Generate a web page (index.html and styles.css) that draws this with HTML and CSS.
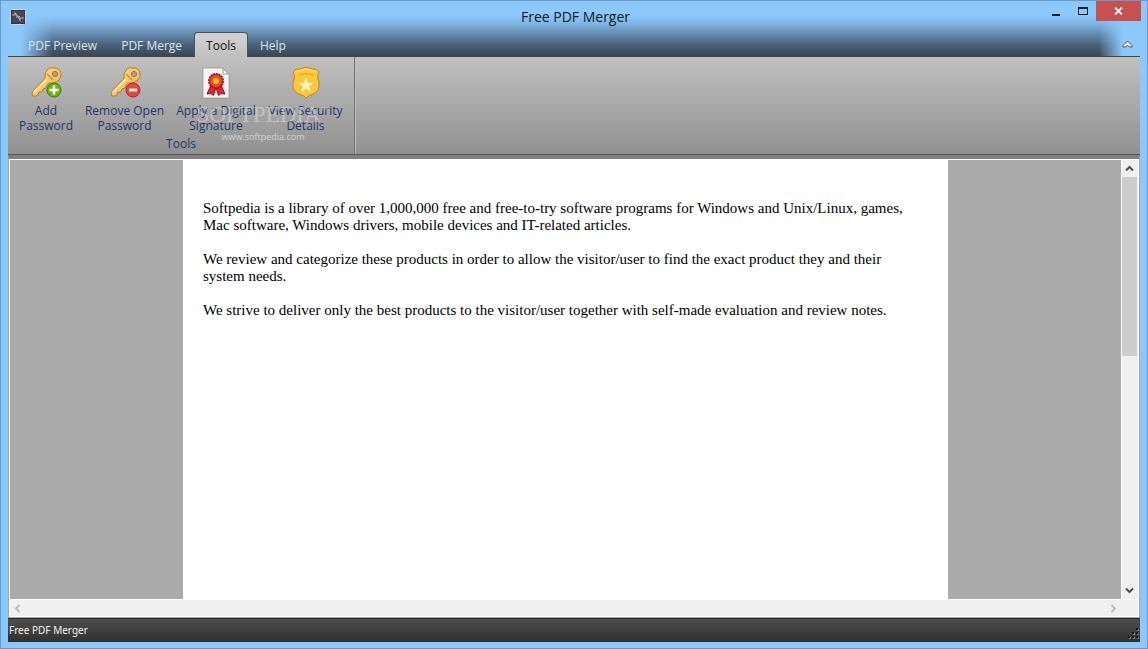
FILE: index.html
```html
<!DOCTYPE html>
<html lang="en">
<head>
  <meta charset="UTF-8">
  <meta name="viewport" content="width=device-width, initial-scale=1.0">
  <title>Free PDF Merger</title>
  <link rel="stylesheet" href="styles.css">
</head>
<body>

  <div class="window">
    <header class="header">
      <div class="titlebar">
        <svg class="app-icon" viewBox="0 0 16 16">
          <rect x="0.5" y="0.5" width="15" height="15" rx="2" fill="#44465a" stroke="#d8d4d0"/>
          <rect x="1.5" y="1.5" width="13" height="13" fill="none" stroke="#33354a"/>
          <path d="M2 6h3V4l3 3.500h2M6 8h2l2 3V9h4" fill="none" stroke="#aeb0ba" stroke-width="1.200"/>
        </svg>
        <h1 class="title">Free PDF Merger</h1>
        <div class="controls">
          <button class="control" aria-label="Minimize">
            <svg width="11" height="11" viewBox="0 0 11 11"><path d="M2 8h8v2H2z" fill="#1b1b1b"/></svg>
          </button>
          <button class="control" aria-label="Maximize">
            <svg width="11" height="11" viewBox="0 0 11 11"><path d="M1 1h10v8H1zM2 3v5h8V3z" fill="#1b1b1b" fill-rule="evenodd"/></svg>
          </button>
          <button class="control close" aria-label="Close">
            <svg width="9" height="8" viewBox="0 0 9 8"><path d="M1 .5l7 7M8 .5l-7 7" stroke="#fff" stroke-width="1.800"/></svg>
          </button>
        </div>
      </div>
      <nav class="tabs">
        <button class="tab">PDF Preview</button>
        <button class="tab">PDF Merge</button>
        <button class="tab active">Tools</button>
        <button class="tab">Help</button>
        <button class="collapse" aria-label="Collapse ribbon">
          <svg width="11" height="9" viewBox="0 0 11 9"><path d="M5.500 1L10 5.500V7H7.500l-2-2-2 2H1V5.500z" fill="#fff" stroke="#3f4650"/></svg>
        </button>
      </nav>
    </header>

    <section class="ribbon">
      <div class="group">
        <div class="tools">
          <button class="tool add">
            <svg class="icon" viewBox="0 0 32 32">
              <use href="#key"/>
              <circle cx="24" cy="23" r="7" fill="#68b80c" stroke="#37770c"/>
              <path d="M24 18.500v9M19.500 23h9" stroke="#fff" stroke-width="2.400"/>
            </svg>
            <span>Add<br>Password</span>
          </button>
          <button class="tool remove">
            <svg class="icon" viewBox="0 0 32 32">
              <use href="#key"/>
              <circle cx="24" cy="23" r="7" fill="#e8463a" stroke="#a72a24"/>
              <path d="M20 23h8" stroke="#fff" stroke-width="2.800"/>
            </svg>
            <span>Remove Open<br>Password</span>
          </button>
          <button class="tool sign">
            <svg class="icon" viewBox="0 0 32 32">
              <path d="M3.500 1.500h20l5 5v24h-25z" fill="#f4f5f5" stroke="#fff"/>
              <path d="M3 31h26V7l-6-6H3z" fill="none" stroke="#8d9092" stroke-width=".8"/>
              <path d="M23 1.500V7h5.500z" fill="#fff" stroke="#999"/>
              <path d="M11 18L7 27l4-.5 2.500 2 2.500-8 2.500 8 2.500-2 4 .5-4-9z" fill="#df292a" stroke="#a90f16"/>
              <circle cx="16" cy="14" r="7.200" fill="#e5292b" stroke="#aa1018" stroke-width="1.600" stroke-dasharray="2 .8"/>
              <circle cx="16" cy="14" r="5" fill="none" stroke="#f47354" stroke-width=".7"/>
              <circle cx="16" cy="14" r="3.500" fill="#ffc321" stroke="#d26b09"/>
            </svg>
            <span>Apply a Digital<br>Signature</span>
          </button>
          <button class="tool view">
            <svg class="icon" viewBox="0 0 32 32">
              <path d="M6 2q2 1 4 0 3-1.500 6-1.500T22 2q2 1 4 0l3 3q-2 3-1 7 1.500 4 1 8-1 5-7 7.500-4 1-6 3.500-2-2.500-6-3.500-6-2.500-7-7.500-.5-4 1-8 1-4-1-7z" fill="#fcc938" stroke="#c78317"/>
              <path d="M6.500 3.500q2 1 4 0 2.500-1.500 5.500-1.500t5.500 1.500q2 1 4 0" fill="none" stroke="#ffe991"/>
              <path d="M9 7.500q7-1.500 14 0" fill="none" stroke="#df991f"/>
              <path d="M16 9l2.300 6.300 6.700.2-5.300 4.100 1.900 6.400-5.600-3.800-5.600 3.800 1.900-6.400L7 15.500l6.700-.2z" fill="#fff2b4" stroke="#f0bb33" stroke-width=".6"/>
            </svg>
            <span>View Security<br>Details</span>
          </button>
        </div>
        <div class="group-label">Tools</div>
        <div class="watermark">
          <div class="brand">SOFTPEDIA<sup>™</sup></div>
          <div class="site">www.softpedia.com</div>
        </div>
      </div>
    </section>

    <main class="viewer">
      <div class="viewport">
        <article class="page">
          <p>Softpedia is a library of over 1,000,000 free and free-to-try software programs for Windows and Unix/Linux, games,<br>Mac software, Windows drivers, mobile devices and IT-related articles.</p>
          <p>We review and categorize these products in order to allow the visitor/user to find the exact product they and their<br>system needs.</p>
          <p>We strive to deliver only the best products to the visitor/user together with self-made evaluation and review notes.</p>
        </article>
      </div>
      <div class="scroll-y">
        <button class="arrow" aria-label="Scroll up">
          <svg width="9" height="7" viewBox="0 0 9 7"><path d="M1 5.500L4.500 2 8 5.500" fill="none" stroke="#505050" stroke-width="2"/></svg>
        </button>
        <div class="thumb"></div>
        <button class="arrow down" aria-label="Scroll down">
          <svg width="9" height="7" viewBox="0 0 9 7"><path d="M1 1.500L4.500 5 8 1.500" fill="none" stroke="#505050" stroke-width="2"/></svg>
        </button>
      </div>
      <div class="scroll-x">
        <button class="arrow" aria-label="Scroll left" disabled>
          <svg width="7" height="9" viewBox="0 0 7 9"><path d="M5.500 1L2 4.500 5.500 8" fill="none" stroke="#bdbdbd" stroke-width="2"/></svg>
        </button>
        <button class="arrow" aria-label="Scroll right" disabled>
          <svg width="7" height="9" viewBox="0 0 7 9"><path d="M1.500 1L5 4.500 1.500 8" fill="none" stroke="#bdbdbd" stroke-width="2"/></svg>
        </button>
      </div>
    </main>

    <footer class="status">
      <span>Free PDF Merger</span>
      <svg class="grip" width="11" height="11" viewBox="0 0 11 11">
        <path d="M9 1h2v2H9zM5 5h2v2H5zM9 5h2v2H9zM1 9h2v2H1zM5 9h2v2H5zM9 9h2v2H9z" fill="#777"/>
        <path d="M8 0h2v2H8zM4 4h2v2H4zM8 4h2v2H8zM0 8h2v2H0zM4 8h2v2H4zM8 8h2v2H8z" fill="#111"/>
      </svg>
    </footer>
  </div>

  <!-- key shape shared by the two password buttons -->
  <svg class="defs" width="0" height="0">
    <defs>
      <linearGradient id="gold" x1="0" y1="0" x2="1" y2="1">
        <stop offset="0" stop-color="#ffe6a0"/>
        <stop offset="1" stop-color="#e9ac3c"/>
      </linearGradient>
      <g id="key">
        <path d="M18 2q2-2 6-1 6 0 7 5 1 5-3 8-4 3-9 2l-2 2-1 3-3 1-1 3-3 0-1 3-2 1H2.500L2 25 15 11.500Q14 6 18 2z" fill="url(#gold)" stroke="#b87a25"/>
        <path d="M4 25L17 12" stroke="#fff0b8" stroke-width="1.300"/>
        <path d="M17 7l6 6" stroke="#c88c35" stroke-width="1.300"/>
        <circle cx="25" cy="7" r="2.600" fill="#aaa49b" stroke="#aa7229"/>
      </g>
    </defs>
  </svg>

</body>
</html>
```
FILE: styles.css
```css
* {
  box-sizing: border-box;
}

body {
  margin: 0;
  font-family: "Open Sans", "Noto Sans", sans-serif;
  font-size: 12px;
  color: #1f3763;
}

button {
  padding: 0;
  border: none;
  background: none;
  font: inherit;
  color: inherit;
}

.window {
  display: flex;
  flex-direction: column;
  min-height: 100vh;
  padding-bottom: 6px;
  border: 1px solid #6a9aca;
  background-color: #8dc8fb;
}

/* Title bar and tabs */
.header {
  background:
    linear-gradient(to right, #8dc8fb 20px, transparent 52px, transparent calc(100% - 48px), #8dc8fb calc(100% - 24px)),
    linear-gradient(to bottom, #8dc8fb 14px, #80b6e5 22px, #6288aa 34px, #48617a 44px, #394654 55px);
}

.titlebar {
  display: grid;
  grid-template-columns: 1fr auto 1fr;
  height: 31px;
  padding: 0 6px 0 9px;
}

.app-icon {
  width: 16px;
  height: 16px;
  margin-top: 8px;
}

.title {
  margin: 0;
  font-size: 14px;
  font-weight: 400;
  line-height: 31px;
  color: #0c1a28;
}

.controls {
  display: flex;
  justify-content: flex-end;
}

.control {
  display: flex;
  justify-content: center;
  align-items: center;
  width: 27px;
  height: 20px;
}

.close {
  width: 45px;
  background-color: #c75050;
}

.tabs {
  display: flex;
  height: 24px;
  padding: 0 13px 0 15px;
}

.tab {
  height: 25px;
  padding: 2px 12px 0;
  color: #dde3e9;
}

.tab.active {
  padding: 1px 11px 0;
  border: 1px solid #55504f;
  border-bottom: none;
  border-radius: 4px 4px 0 0;
  background: linear-gradient(#d3d3d3, #c1c0c0);
  color: #111;
  z-index: 1;
}

.collapse {
  width: 13px;
  margin-left: auto;
}

/* Ribbon */
.ribbon {
  display: flex;
  height: 99px;
  margin: 0 7px;
  border-top: 1px solid #484444;
  border-bottom: 1px solid #545454;
  background: linear-gradient(#c1c0c0, #919191);
}

.group {
  position: relative;
  display: flex;
  flex-direction: column;
  justify-content: space-between;
  padding: 10px 5px 2px;
  border-right: 1px solid #727272;
  box-shadow: 1px 0 #bdbdbd;
}

.tools {
  display: flex;
}

.tool {
  display: flex;
  flex-direction: column;
  align-items: center;
  gap: 4px;
  line-height: 15px;
  white-space: nowrap;
}

.add {
  width: 66px;
}

.remove {
  width: 91px;
}

.sign {
  width: 92px;
}

.view {
  width: 87px;
}

.icon {
  width: 32px;
  height: 32px;
}

.group-label {
  line-height: 16px;
  text-align: center;
}

.watermark {
  position: absolute;
  top: 45px;
  left: 188px;
  width: 134px;
  color: rgba(225, 225, 225, 0.5);
  text-align: center;
  pointer-events: none;
}

.brand {
  font-family: "Liberation Serif", serif;
  font-size: 23px;
  line-height: 26px;
  white-space: nowrap;
}

.brand sup {
  font-size: 9px;
  line-height: 9px;
}

.site {
  font-size: 9px;
  line-height: 18px;
  color: rgba(235, 235, 235, 0.7);
}

/* Document area */
.viewer {
  display: grid;
  flex: 1;
  grid-template-columns: 1fr 16px;
  grid-template-rows: 1fr 16px;
  gap: 1px;
  margin: 0 7px;
  padding: 1px;
  border: 1px solid #a5a5a5;
  border-top: 4px solid #808080;
  background-color: #fff;
}

.viewport {
  display: flex;
  justify-content: center;
  background-color: #ababab;
}

.page {
  width: 765px;
  padding: 40px 20px;
  background-color: #fff;
  font-family: "Liberation Serif", serif;
  font-size: 15px;
  line-height: 17px;
  color: #000;
}

.page p {
  margin: 0 0 17px;
  white-space: nowrap;
}

.scroll-y {
  display: flex;
  flex-direction: column;
  background-color: #f0f0f0;
}

.scroll-x {
  display: flex;
  grid-column: 1 / 3;
  justify-content: space-between;
  padding-right: 17px;
  background-color: #f0f0f0;
}

.arrow {
  display: flex;
  justify-content: center;
  align-items: center;
  width: 15px;
  height: 17px;
}

.scroll-x .arrow {
  height: 16px;
}

.thumb {
  width: 15px;
  height: 179px;
  background-color: #cdcdcd;
}

.down {
  margin-top: auto;
}

/* Status bar */
.status {
  display: flex;
  justify-content: space-between;
  height: 24px;
  margin: 0 7px;
  padding: 0 1px;
  border-top: 1px solid #2b2b2b;
  background: linear-gradient(#4e4e4e, #303030);
  font-family: "Noto Sans", sans-serif;
  font-size: 10px;
  line-height: 23px;
  color: #f0f0f0;
}

.grip {
  align-self: flex-end;
  margin-bottom: 3px;
}

.defs {
  position: absolute;
}
```
